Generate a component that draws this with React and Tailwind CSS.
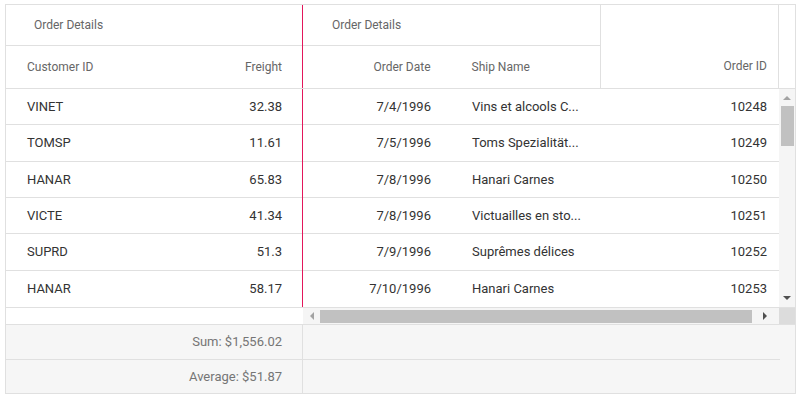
import React from 'react';

const rows = [
    { customer: 'VINET', freight: '32.38', date: '7/4/1996', ship: 'Vins et alcools C...', id: '10248' },
    { customer: 'TOMSP', freight: '11.61', date: '7/5/1996', ship: 'Toms Spezialität...', id: '10249' },
    { customer: 'HANAR', freight: '65.83', date: '7/8/1996', ship: 'Hanari Carnes', id: '10250' },
    { customer: 'VICTE', freight: '41.34', date: '7/8/1996', ship: 'Victuailles en sto...', id: '10251' },
    { customer: 'SUPRD', freight: '51.3', date: '7/9/1996', ship: 'Suprêmes délices', id: '10252' },
    { customer: 'HANAR', freight: '58.17', date: '7/10/1996', ship: 'Hanari Carnes', id: '10253' },
];

const App = () => {
    return (
        <div className="w-[800px] h-[399px] bg-white pt-[4px] pl-[5px] font-['Roboto',sans-serif] text-[13px]">
            <div className="w-[791px] border border-[#e0e0e0] flex flex-col">
                {/* Header */}
                <div className="flex h-[84px] border-b border-[#e0e0e0] text-[#666] text-[12px]">
                    <div className="w-[296px] flex flex-col">
                        <div className="h-[41px] flex items-center pl-[28px] border-b border-[#e0e0e0]">Order Details</div>
                        <div className="flex-1 flex items-center">
                            <div className="w-[148px] pl-[21px]">Customer ID</div>
                            <div className="w-[148px] pr-[20px] text-right">Freight</div>
                        </div>
                    </div>
                    <div className="w-px bg-[#e3165b]"></div>
                    <div className="flex-1 flex">
                        <div className="w-[298px] flex flex-col border-r border-[#e0e0e0]">
                            <div className="h-[41px] flex items-center pl-[29px] border-b border-[#e0e0e0]">Order Details</div>
                            <div className="flex-1 flex items-center">
                                <div className="w-[148px] pr-[20px] text-right">Order Date</div>
                                <div className="w-[150px] pl-[21px]">Ship Name</div>
                            </div>
                        </div>
                        <div className="w-[178px] flex items-end justify-end pr-[11px] pb-[13px] border-r border-[#e0e0e0]">Order ID</div>
                        <div className="flex-1"></div>
                    </div>
                </div>

                {/* Content */}
                <div className="flex h-[218px] text-[#333]">
                    <div className="w-[296px] flex flex-col">
                        {rows.map((r, i) => (
                            <div key={i} className={`flex items-center h-[36.33px] ${i < rows.length - 1 ? 'border-b border-[#e0e0e0]' : ''}`}>
                                <div className="w-[148px] pl-[21px]">{r.customer}</div>
                                <div className="w-[148px] pr-[20px] text-right">{r.freight}</div>
                            </div>
                        ))}
                    </div>
                    <div className="w-px bg-[#e3165b]"></div>
                    <div className="flex-1 flex">
                        <div className="w-[476px] flex flex-col">
                            {rows.map((r, i) => (
                                <div key={i} className={`flex items-center h-[36.33px] ${i < rows.length - 1 ? 'border-b border-[#e0e0e0]' : ''}`}>
                                    <div className="w-[148px] pr-[20px] text-right">{r.date}</div>
                                    <div className="w-[150px] pl-[21px]">{r.ship}</div>
                                    <div className="w-[178px] pr-[12px] text-right">{r.id}</div>
                                </div>
                            ))}
                        </div>
                        <div className="flex-1 bg-[#f5f5f5] flex flex-col items-center">
                            <div className="h-[17px] flex items-center justify-center">
                                <svg width="8" height="5" viewBox="0 0 8 5"><path d="M0 5 L4 1 L8 5 Z" fill="#a3a3a3" /></svg>
                            </div>
                            <div className="w-[13px] h-[40px] bg-[#c1c1c1]"></div>
                            <div className="flex-1"></div>
                            <div className="h-[17px] flex items-center justify-center">
                                <svg width="8" height="5" viewBox="0 0 8 5"><path d="M0 0 L8 0 L4 4 Z" fill="#505050" /></svg>
                            </div>
                        </div>
                    </div>
                </div>

                {/* Horizontal scrollbar */}
                <div className="flex h-[18px] border-t border-b border-[#e0e0e0]">
                    <div className="w-[297px] bg-white"></div>
                    <div className="w-[476px] bg-[#f5f5f5] flex items-center">
                        <div className="w-[17px] flex justify-center">
                            <svg width="5" height="8" viewBox="0 0 5 8"><path d="M5 0 L5 8 L1 4 Z" fill="#a3a3a3" /></svg>
                        </div>
                        <div className="w-[432px] h-[13px] bg-[#c1c1c1]"></div>
                        <div className="flex-1 flex justify-center">
                            <svg width="5" height="8" viewBox="0 0 5 8"><path d="M0 0 L4 4 L0 8 Z" fill="#505050" /></svg>
                        </div>
                    </div>
                    <div className="flex-1 bg-[#dcdcdc]"></div>
                </div>

                {/* Footer aggregates */}
                <div className="flex bg-[#f6f6f6] text-[#757575]">
                    <div className="w-[297px] border-r border-[#e0e0e0] flex flex-col">
                        <div className="h-[35px] flex items-center justify-end pr-[20px] border-b border-[#e0e0e0]">Sum: $1,556.02</div>
                        <div className="h-[33px] flex items-center justify-end pr-[20px]">Average: $51.87</div>
                    </div>
                    <div className="flex-1 flex flex-col">
                        <div className="h-[35px] w-[477px] border-b border-[#e0e0e0]"></div>
                        <div className="h-[33px]"></div>
                    </div>
                </div>
            </div>
        </div>
    );
};

export default App;
